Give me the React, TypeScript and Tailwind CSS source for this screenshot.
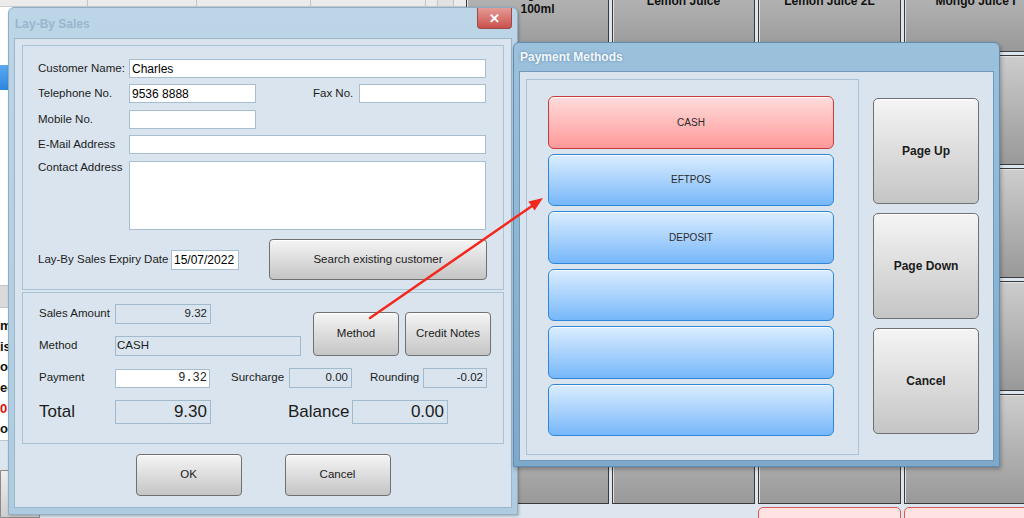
import type { ReactNode } from 'react';

const gridLabels: string[][] = [
  ['Orange Juice\n100ml', 'Lemon Juice', 'Lemon Juice 2L', 'Mongo Juice I'],
  ['', '', '', ''],
  ['', '', '', ''],
  ['', '', '', ''],
  ['', '', '', ''],
];

// fragments of the receipt lines that peek out from under the dialog
const sideRows = ['m', 'is', 'ol', 'ee', '0', 'ol'];

const methods = ['CASH', 'EFTPOS', 'DEPOSIT', '', '', ''];

function GrayButton({ children, className }: { children: ReactNode; className: string }) {
  return (
    <div
      className={`flex items-center justify-center rounded-[4px] border border-[#707070] bg-linear-to-b from-[#f5f5f5] to-[#c5c5c5] shadow-[inset_0_1px_0_#ffffff] text-[#1b1b1b] ${className}`}
    >
      {children}
    </div>
  );
}

function Field({ className, children }: { className: string; children?: ReactNode }) {
  return (
    <div className={`flex items-center border border-[#a7bdd0] bg-white px-[2px] text-[12px] text-black ${className}`}>
      {children}
    </div>
  );
}

function Box({ className, children, right = true }: { className: string; children?: ReactNode; right?: boolean }) {
  return (
    <div
      className={`flex items-center border border-[#a2bacd] ${right ? 'justify-end pr-[3px]' : 'pl-[1px]'} ${className}`}
    >
      {children}
    </div>
  );
}

function Background() {
  return (
    <div className="flex h-full">
      <div className="w-[466px] shrink-0 flex flex-col bg-white overflow-hidden">
        <div className="h-[7px] flex bg-[#ebebeb] border-b border-[#cfcfcf]">
          <div className="w-[88px] border-r border-[#c4c4c4]" />
          <div className="w-[109px] border-r border-[#c4c4c4]" />
          <div className="w-[114px] border-r border-[#c4c4c4]" />
          <div className="w-[115px] border-r border-[#c4c4c4]" />
          <div className="w-[11px]" />
          <div className="w-[17px] border-x border-[#c4c4c4] bg-[#e2e2e2]" />
        </div>
        <div className="h-[58px]" />
        <div className="h-[25px] bg-linear-to-b from-[#5aa9f0] to-[#2a86de]" />
        <div className="h-[195px]" />
        <div className="h-[23px] bg-[#dadada] border-y border-[#c6c6c6]" />
        <div className="h-[132px] flex flex-col pt-[8px] font-bold text-[13px] text-[#111]">
          {sideRows.map((t, i) => (
            <div key={i} className={`h-[21.5px] whitespace-nowrap ${t === '0' ? 'text-[#e01010]' : ''}`}>
              {t}
            </div>
          ))}
        </div>
        <div className="h-[30px] bg-[#dce6ef] border-t border-[#b7c7d4]" />
        <div className="flex-1 bg-[#dce6ef]">
          <div className="h-full w-[40px] rounded-tr-[4px] border border-[#8a8a8a] bg-linear-to-b from-[#eeeeee] to-[#cfcfcf]" />
        </div>
      </div>
      <div className="flex-1 bg-[#dde6ee] overflow-hidden">
        <div className="mt-[-58px] grid grid-cols-[repeat(4,143px)] auto-rows-[110px] gap-[3px]">
          {gridLabels.flatMap((row, r) =>
            row.map((label, c) => (
              <div
                key={`${r}-${c}`}
                className="flex items-center justify-center pt-[9px] border border-[#3a3a3a] bg-linear-to-b from-[#cdcdcd] to-[#999999] shadow-[inset_1px_1px_0_#e2e2e2] text-center font-bold text-[12px] leading-[15px] text-[#111] whitespace-pre-line"
              >
                {label}
              </div>
            ))
          )}
          <div />
          <div />
          <div className="rounded-t-[5px] border border-[#e05555] bg-[#ffe3e3]" />
          <div className="rounded-t-[5px] border border-[#e05555] bg-[#ffe3e3]" />
        </div>
      </div>
    </div>
  );
}

function LayBySales() {
  return (
    <div className="absolute left-[8px] top-[7px] w-[510px] h-[508px] flex flex-col rounded-t-[6px] border border-[#8fadc5] bg-linear-to-b from-[#bcd5e7] to-[#aecbe0] px-[5px] pb-[6px] shadow-[1px_1px_3px_rgba(0,0,0,0.25)]">
      <div className="h-[30px] flex items-start justify-between">
        <span className="mt-[7px] ml-[1px] font-bold text-[12px] text-[#9ab5cc]">Lay-By Sales</span>
        <div className="w-[35px] h-[21px] flex items-center justify-center rounded-b-[4px] border border-t-0 border-[#9b4a48] bg-linear-to-b from-[#e59a96] to-[#c9504b] text-white font-bold text-[13px] leading-none">
          ✕
        </div>
      </div>
      <div className="flex-1 flex flex-col border border-[#9cb7cc] bg-[#d9e4ee] px-[7px] pt-[6px] text-[11.5px] text-[#1c1c1c]">
        <div className="h-[245px] border border-[#a9c3d6] pl-[15px] pt-[13px] flex flex-col">
          <div className="flex items-center h-[19px]">
            <span className="w-[91px]">Customer Name:</span>
            <Field className="w-[357px] h-[19px]">Charles</Field>
          </div>
          <div className="flex items-center h-[19px] mt-[6px]">
            <span className="w-[91px]">Telephone No.</span>
            <Field className="w-[127px] h-[19px]">9536 8888</Field>
            <span className="ml-[57px] w-[46px]">Fax No.</span>
            <Field className="w-[127px] h-[19px]" />
          </div>
          <div className="flex items-center h-[19px] mt-[7px]">
            <span className="w-[91px]">Mobile No.</span>
            <Field className="w-[127px] h-[19px]" />
          </div>
          <div className="flex items-center h-[19px] mt-[6px]">
            <span className="w-[91px]">E-Mail Address</span>
            <Field className="w-[357px] h-[19px]" />
          </div>
          <div className="flex items-start mt-[7px]">
            <span className="w-[91px] mt-[-2px]">Contact Address</span>
            <Field className="w-[357px] h-[69px]" />
          </div>
          <div className="flex items-center h-[41px] mt-[9px]">
            <span className="w-[133px]">Lay-By Sales Expiry Date</span>
            <Field className="w-[68px] h-[20px]">15/07/2022</Field>
            <GrayButton className="ml-[30px] w-[218px] h-[41px]">Search existing customer</GrayButton>
          </div>
        </div>

        <div className="mt-[2px] h-[152px] border border-[#a9c3d6] pl-[16px] pt-[11px] flex flex-col">
          <div className="flex">
            <div className="flex flex-col w-[262px]">
              <div className="flex items-center h-[20px]">
                <span className="w-[76px]">Sales Amount</span>
                <Box className="w-[96px] h-[20px]">9.32</Box>
              </div>
              <div className="flex items-center h-[20px] mt-[12px]">
                <span className="w-[76px]">Method</span>
                <Box className="w-[186px] h-[20px]" right={false}>CASH</Box>
              </div>
            </div>
            <div className="ml-[12px] mt-[8px] flex gap-[6px]">
              <GrayButton className="w-[86px] h-[44px]">Method</GrayButton>
              <GrayButton className="w-[86px] h-[44px]">Credit Notes</GrayButton>
            </div>
          </div>
          <div className="flex items-center h-[20px] mt-[12px]">
            <span className="w-[76px]">Payment</span>
            <div className="w-[95px] h-[19px] flex items-center justify-end pr-[2px] border border-[#a7bdd0] bg-white font-['Liberation_Mono',monospace] text-[12px] text-[#222]">
              9.32
            </div>
            <span className="ml-[21px] w-[58px]">Surcharge</span>
            <Box className="w-[63px] h-[20px]">0.00</Box>
            <span className="ml-[18px] w-[53px]">Rounding</span>
            <Box className="w-[64px] h-[20px]">-0.02</Box>
          </div>
          <div className="flex items-center h-[24px] mt-[12px] text-[17px]">
            <span className="w-[76px]">Total</span>
            <Box className="w-[96px] h-[24px]">9.30</Box>
            <span className="ml-[77px] w-[64px]">Balance</span>
            <Box className="w-[96px] h-[24px]">0.00</Box>
          </div>
        </div>

        <div className="flex-1 flex items-center justify-center gap-[43px] pb-[1px]">
          <GrayButton className="w-[106px] h-[42px]">OK</GrayButton>
          <GrayButton className="w-[106px] h-[42px]">Cancel</GrayButton>
        </div>
      </div>
    </div>
  );
}

function PaymentMethods() {
  return (
    <div className="absolute left-[513px] top-[42px] w-[487px] h-[425px] flex flex-col rounded-t-[6px] border border-[#5f8cb2] bg-linear-to-b from-[#9cc1dd] to-[#7ea9ca] px-[5px] pb-[5px] shadow-[1px_2px_4px_rgba(0,0,0,0.3)]">
      <div className="h-[28px] flex items-center pl-[1px] font-bold text-[12px] text-[#f3f8fc] [text-shadow:0_0_3px_rgba(60,100,140,0.6)]">
        Payment Methods
      </div>
      <div className="flex-1 flex border border-[#6f99bb] bg-[#d9e4ee] pl-[6px] pt-[7px]">
        <div className="w-[333px] h-[376px] border border-[#a9c3d6] pl-[21px] pt-[16px] flex flex-col gap-[5px]">
          {methods.map((m, i) => (
            <div
              key={i}
              className={`w-[286px] h-[52.5px] shrink-0 flex items-center justify-center rounded-[6px] border text-[10px] text-[#2a2a2a] shadow-[inset_0_1px_0_rgba(255,255,255,0.8)] bg-linear-to-b ${
                m === 'CASH'
                  ? 'border-[#c93b3b] from-[#ffdcdc] to-[#ff9999]'
                  : 'border-[#2f86d9] from-[#dbedfe] to-[#76b7f9]'
              }`}
            >
              {m}
            </div>
          ))}
        </div>
        <div className="ml-[14px] pt-[19px] flex flex-col gap-[9px] font-bold text-[12px]">
          <GrayButton className="w-[106px] h-[106px] rounded-[5px] border-[#7a7a7a]">Page Up</GrayButton>
          <GrayButton className="w-[106px] h-[106px] rounded-[5px] border-[#7a7a7a]">Page Down</GrayButton>
          <GrayButton className="w-[106px] h-[106px] rounded-[5px] border-[#7a7a7a]">Cancel</GrayButton>
        </div>
      </div>
    </div>
  );
}

export default function App() {
  return (
    <div className="relative w-[1024px] h-[518px] overflow-hidden bg-[#dde6ee] font-['Liberation_Sans',Arial,sans-serif]">
      <Background />
      <LayBySales />
      <PaymentMethods />
      <svg className="absolute inset-0 pointer-events-none" width="1024" height="518">
        <line x1="370" y1="318" x2="532" y2="206" stroke="#f3281d" strokeWidth="2.5" strokeLinecap="round" />
        <polygon points="543,198 534.6,210.5 528.4,201.5" fill="#f3281d" />
      </svg>
    </div>
  );
}
